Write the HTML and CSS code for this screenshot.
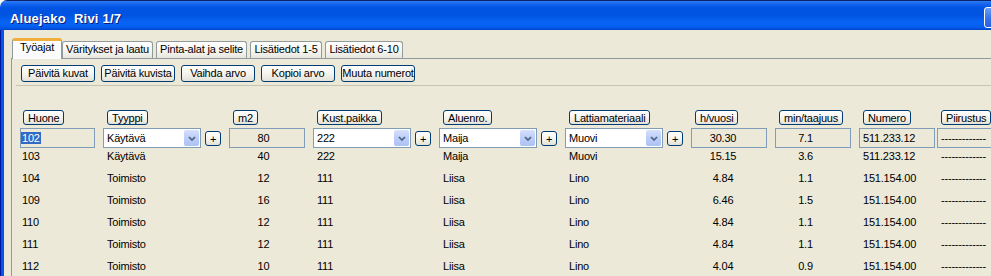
FILE: index.html
```html
<!DOCTYPE html>
<html>
    <!-- Init and CSS-->
    <head>
        <meta charset="utf-8"/>
        <title>Aluejako</title>
        <link rel="stylesheet" href="styles.css">
    </head>

    <body>
        <div class="window">
            <!-- window caption -->
            <div class="titlebar">
                <span class="app-name">Aluejako</span>
                <span class="row-info">Rivi 1/7</span>
                <span class="caption-button"></span>
            </div>

            <div class="window-main">
                <div class="frame-left"></div>

                <div class="client">
                    <!-- tab strip -->
                    <div class="tabs">
                        <div class="tab tab-active w-50">Työajat</div>
                        <div class="tab w-91">Väritykset ja laatu</div>
                        <div class="tab w-91">Pinta-alat ja selite</div>
                        <div class="tab w-72">Lisätiedot 1-5</div>
                        <div class="tab w-78">Lisätiedot 6-10</div>
                    </div>

                    <div class="panel">
                        <div class="toolbar">
                            <button class="xp-button tool-button">Päivitä kuvat</button>
                            <button class="xp-button tool-button">Päivitä kuvista</button>
                            <button class="xp-button tool-button">Vaihda arvo</button>
                            <button class="xp-button tool-button">Kopioi arvo</button>
                            <button class="xp-button tool-button">Muuta numerot</button>
                        </div>

                        <!-- the room list -->
                        <div class="grid">
                            <div class="row">
                                <div class="head first"><button class="xp-button head-button">Huone</button></div>
                                <div class="head"><button class="xp-button head-button">Tyyppi</button></div>
                                <div class="head"><button class="xp-button head-button">m2</button></div>
                                <div class="head"><button class="xp-button head-button">Kust.paikka</button></div>
                                <div class="head"><button class="xp-button head-button">Aluenro.</button></div>
                                <div class="head"><button class="xp-button head-button">Lattiamateriaali</button></div>
                                <div class="head"><button class="xp-button head-button">h/vuosi</button></div>
                                <div class="head"><button class="xp-button head-button">min/taajuus</button></div>
                                <div class="head"><button class="xp-button head-button">Numero</button></div>
                                <div class="head last-col"><button class="xp-button head-button">Piirustus</button></div>
                            </div>

                            <!-- edit row -->
                            <div class="row">
                                <div class="field room-field"><span class="selected">102</span></div>
                                <div class="combo-group">
                                    <div class="combo"><span class="combo-text">Käytävä</span><span class="combo-arrow"><svg width="8" height="5" viewBox="0 0 8 5"><polyline points="1,1 4,4 7,1" fill="none" stroke="#4d6185" stroke-width="1.7"/></svg></span></div>
                                    <button class="xp-button plus-button">+</button>
                                </div>
                                <div class="field m2">80</div>
                                <div class="combo-group">
                                    <div class="combo"><span class="combo-text">222</span><span class="combo-arrow"><svg width="8" height="5" viewBox="0 0 8 5"><polyline points="1,1 4,4 7,1" fill="none" stroke="#4d6185" stroke-width="1.7"/></svg></span></div>
                                    <button class="xp-button plus-button">+</button>
                                </div>
                                <div class="combo-group">
                                    <div class="combo"><span class="combo-text">Maija</span><span class="combo-arrow"><svg width="8" height="5" viewBox="0 0 8 5"><polyline points="1,1 4,4 7,1" fill="none" stroke="#4d6185" stroke-width="1.7"/></svg></span></div>
                                    <button class="xp-button plus-button">+</button>
                                </div>
                                <div class="combo-group">
                                    <div class="combo"><span class="combo-text">Muovi</span><span class="combo-arrow"><svg width="8" height="5" viewBox="0 0 8 5"><polyline points="1,1 4,4 7,1" fill="none" stroke="#4d6185" stroke-width="1.7"/></svg></span></div>
                                    <button class="xp-button plus-button">+</button>
                                </div>
                                <div class="field hours">30.30</div>
                                <div class="field minutes">7.1</div>
                                <div class="field text-field">511.233.12</div>
                                <div class="field text-field last-col">-------------</div>
                            </div>

                            <div class="row">
                                <div class="cell room">103</div>
                                <div class="cell">Käytävä</div>
                                <div class="cell m2">40</div>
                                <div class="cell">222</div>
                                <div class="cell">Maija</div>
                                <div class="cell">Muovi</div>
                                <div class="cell hours">15.15</div>
                                <div class="cell minutes">3.6</div>
                                <div class="cell">511.233.12</div>
                                <div class="cell last-col">-------------</div>
                            </div>

                            <div class="row">
                                <div class="cell room">104</div>
                                <div class="cell">Toimisto</div>
                                <div class="cell m2">12</div>
                                <div class="cell">111</div>
                                <div class="cell">Liisa</div>
                                <div class="cell">Lino</div>
                                <div class="cell hours">4.84</div>
                                <div class="cell minutes">1.1</div>
                                <div class="cell">151.154.00</div>
                                <div class="cell last-col">-------------</div>
                            </div>

                            <div class="row">
                                <div class="cell room">109</div>
                                <div class="cell">Toimisto</div>
                                <div class="cell m2">16</div>
                                <div class="cell">111</div>
                                <div class="cell">Liisa</div>
                                <div class="cell">Lino</div>
                                <div class="cell hours">6.46</div>
                                <div class="cell minutes">1.5</div>
                                <div class="cell">151.154.00</div>
                                <div class="cell last-col">-------------</div>
                            </div>

                            <div class="row">
                                <div class="cell room">110</div>
                                <div class="cell">Toimisto</div>
                                <div class="cell m2">12</div>
                                <div class="cell">111</div>
                                <div class="cell">Liisa</div>
                                <div class="cell">Lino</div>
                                <div class="cell hours">4.84</div>
                                <div class="cell minutes">1.1</div>
                                <div class="cell">151.154.00</div>
                                <div class="cell last-col">-------------</div>
                            </div>

                            <div class="row">
                                <div class="cell room">111</div>
                                <div class="cell">Toimisto</div>
                                <div class="cell m2">12</div>
                                <div class="cell">111</div>
                                <div class="cell">Liisa</div>
                                <div class="cell">Lino</div>
                                <div class="cell hours">4.84</div>
                                <div class="cell minutes">1.1</div>
                                <div class="cell">151.154.00</div>
                                <div class="cell last-col">-------------</div>
                            </div>

                            <div class="row">
                                <div class="cell room">112</div>
                                <div class="cell">Toimisto</div>
                                <div class="cell m2">10</div>
                                <div class="cell">111</div>
                                <div class="cell">Liisa</div>
                                <div class="cell">Lino</div>
                                <div class="cell hours">4.04</div>
                                <div class="cell minutes">0.9</div>
                                <div class="cell">151.154.00</div>
                                <div class="cell last-col">-------------</div>
                            </div>
                        </div>
                    </div>
                </div>
            </div>
        </div>
    </body>

</html>
```

FILE: styles.css
```css
/* the page itself, the window runs past the right edge */
body {
    margin: 0;
    background-color: #ffffff;
    font-family: "Liberation Sans", Arial, sans-serif;
    font-size: 11px;
    letter-spacing: -0.2px;
    color: #000000;
    overflow: hidden;
}

.window {
    width: 1010px;
}

/* blue XP caption */
.titlebar {
    display: flex;
    align-items: center;
    box-sizing: border-box;
    height: 30px;
    padding: 0 5px 0 10px;
    border-radius: 7px 7px 0 0;
    background: linear-gradient(to bottom, #0a246a 0, #0a246a 1px, #2f7cf6 1px, #1565ef 4px, #0054e2 8px, #0053df 15px, #0864f4 22px, #0661f1 26px, #0050dc 29px, #003fc0 30px);
    color: #ffffff;
    font-size: 13px;
    font-weight: bold;
    letter-spacing: 0.2px;
    text-shadow: 1px 1px 0 #0a1a7a;
}

.app-name,
.row-info {
    padding-top: 6px;
    line-height: 15px;
}

/* room for the gap before the row counter */
.app-name {
    flex-shrink: 0;
    width: 64px;
}

.caption-button {
    margin-left: auto;
    margin-top: 4px;
    box-sizing: border-box;
    width: 21px;
    height: 21px;
    border: 1px solid #ffffff;
    border-radius: 3px;
    background: linear-gradient(to bottom, #6d9ef9, #3a74ea 50%, #2660e0);
}

.window-main {
    display: flex;
}

.frame-left {
    flex-shrink: 0;
    width: 4px;
    background: linear-gradient(to right, #00179a 1px, #0055ea 1px);
}

/* beige client area */
.client {
    flex: 1;
    min-width: 0;
    height: 250px;
    padding: 8px 0 0 7px;
    background-color: #ece9d8;
}

/* tabs */
.tabs {
    display: flex;
    align-items: flex-end;
    height: 20px;
    padding-left: 1px;
    border-bottom: 1px solid #919b9c;
}

.tab {
    flex-shrink: 0;
    box-sizing: border-box;
    height: 17px;
    margin-right: 3px;
    border: 1px solid #919b9c;
    border-bottom: none;
    border-radius: 3px 3px 0 0;
    background: linear-gradient(to bottom, #ffffff, #f6f5f1 55%, #e7e6de);
    line-height: 14px;
    text-align: center;
    white-space: nowrap;
}

.tab-active {
    height: 21px;
    margin-right: 0;
    margin-bottom: -1px;
    border-top: 3px solid #f2ae3a;
    background: #fcfcfe;
    line-height: 13px;
}

.w-50 { width: 50px; }
.w-91 { width: 91px; }
.w-72 { width: 72px; }
.w-78 { width: 78px; }

.panel {
    height: 220px;
    padding-left: 4px;
    border-left: 1px solid #919b9c;
}

/* XP style push button */
.xp-button {
    box-sizing: border-box;
    margin: 0;
    padding: 0;
    border: 1px solid #003c74;
    border-radius: 3px;
    background: linear-gradient(to bottom, #ffffff, #f5f4ef 50%, #e4e2d8);
    font-family: inherit;
    font-size: 11px;
    letter-spacing: inherit;
    color: #000000;
    white-space: nowrap;
}

.toolbar {
    display: flex;
    gap: 6px;
    padding: 6px 0 3px 5px;
    border-bottom: 1px solid #c7c4b4;
}

.tool-button {
    flex-shrink: 0;
    width: 74px;
    height: 17px;
    line-height: 15px;
}

/* room list */
.grid {
    display: grid;
    grid-template-columns: 75px 118px 76px 118px 118px 118px 76px 76px 76px 76px;
    grid-template-rows: 18px 20px repeat(6, 22px);
    column-gap: 8px;
    margin: 24px 0 0 4px;
}

.row {
    display: contents;
}

.head {
    padding-left: 4px;
}

.head.first {
    padding-left: 3px;
}

.head-button {
    height: 15px;
    padding: 1px 4px 0;
    line-height: 13px;
}

.last-col {
    margin-left: -6px;
}

.field {
    box-sizing: border-box;
    height: 20px;
    padding-left: 3px;
    border: 1px solid #7f9db9;
    line-height: 18px;
    white-space: nowrap;
    overflow: hidden;
}

.room-field {
    padding-left: 0;
}

.selected {
    padding: 0 1px;
    background-color: #316ac5;
    color: #ffffff;
}

.combo-group {
    display: flex;
    align-items: flex-start;
}

.combo {
    display: flex;
    box-sizing: border-box;
    width: 98px;
    height: 20px;
    border: 1px solid #7f9db9;
    background-color: #ffffff;
}

.combo-text {
    flex: 1;
    padding-left: 3px;
    line-height: 18px;
}

.combo-arrow {
    display: flex;
    align-items: center;
    justify-content: center;
    width: 15px;
    margin: 1px 1px 1px 0;
    border-radius: 2px;
    background: linear-gradient(to bottom, #d5e1fd, #bccdf8 50%, #adc2f3);
}

.plus-button {
    flex-shrink: 0;
    width: 16px;
    height: 15px;
    margin: 3px 0 0 4px;
    line-height: 12px;
}

.cell {
    padding-left: 4px;
    line-height: 16px;
    white-space: nowrap;
    overflow: hidden;
}

.cell.room {
    padding-left: 2px;
}

/* number columns, centred a little left of the middle */
.m2 {
    padding-left: 0;
    padding-right: 7px;
    text-align: center;
}

.hours {
    padding-left: 0;
    padding-right: 12px;
    text-align: center;
}

.minutes {
    padding-left: 0;
    padding-right: 15px;
    text-align: center;
}
```
